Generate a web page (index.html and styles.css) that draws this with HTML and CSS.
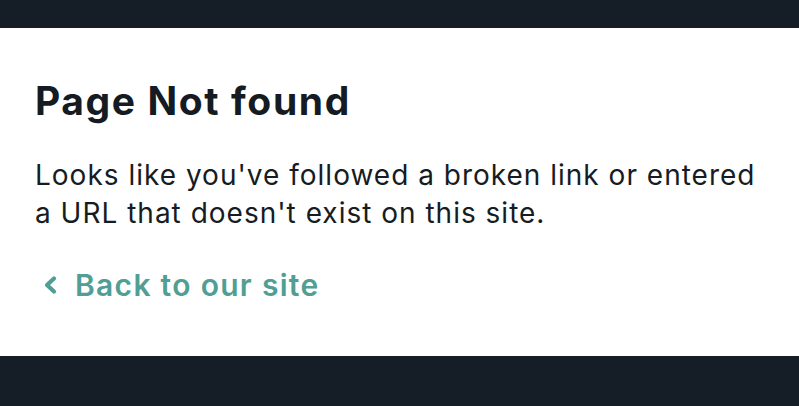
FILE: index.html
```html
<!DOCTYPE html>
<html lang="en">
<head>
<meta charset="utf-8">
<title>Page Not found</title>
<link rel="stylesheet" href="styles.css">
</head>
<body>
<header class="topbar"></header>
<main class="content">
  <h1 class="title">Page Not found</h1>
  <p class="message">Looks like you've followed a broken link or entered a URL that doesn't exist on this site.</p>
  <a class="back" href="#">
    <svg class="chev" width="14" height="20" viewBox="0 0 14 20" aria-hidden="true"><path d="M11 3.5 L4 10 L11 16.5" fill="none" stroke="currentColor" stroke-width="4.2" stroke-linecap="round" stroke-linejoin="round"/></svg>
    <span>Back to our site</span>
  </a>
</main>
<footer class="bottombar"></footer>
</body>
</html>
```
FILE: styles.css
```css
* { box-sizing: border-box; }
html, body { margin: 0; padding: 0; }
body {
  width: 799px;
  height: 406px;
  background: #151d26;
  font-family: Inter, "Noto Sans", sans-serif;
  display: flex;
  flex-direction: column;
  overflow: hidden;
}
.topbar { height: 28px; background: #151d26; flex: none; }
.content {
  height: 328px;
  background: #ffffff;
  padding: 49px 20px 0 35px;
  flex: none;
}
.bottombar { flex: 1; background: #151d26; }
.title {
  margin: 0;
  font-size: 39px;
  line-height: 48px;
  font-weight: 700;
  color: #141b22;
  letter-spacing: 1.6px;
}
.message {
  margin: 31px 0 0 0;
  font-size: 28px;
  line-height: 38px;
  font-weight: 400;
  color: #161c22;
  letter-spacing: 1px;
}
.back {
  display: flex;
  align-items: center;
  gap: 18px;
  margin-top: 35px;
  padding-left: 8px;
  color: #519e95;
  text-decoration: none;
  font-size: 30px;
  line-height: 36px;
  font-weight: 600;
  letter-spacing: 1.3px;
}
.chev { flex: none; }
```
